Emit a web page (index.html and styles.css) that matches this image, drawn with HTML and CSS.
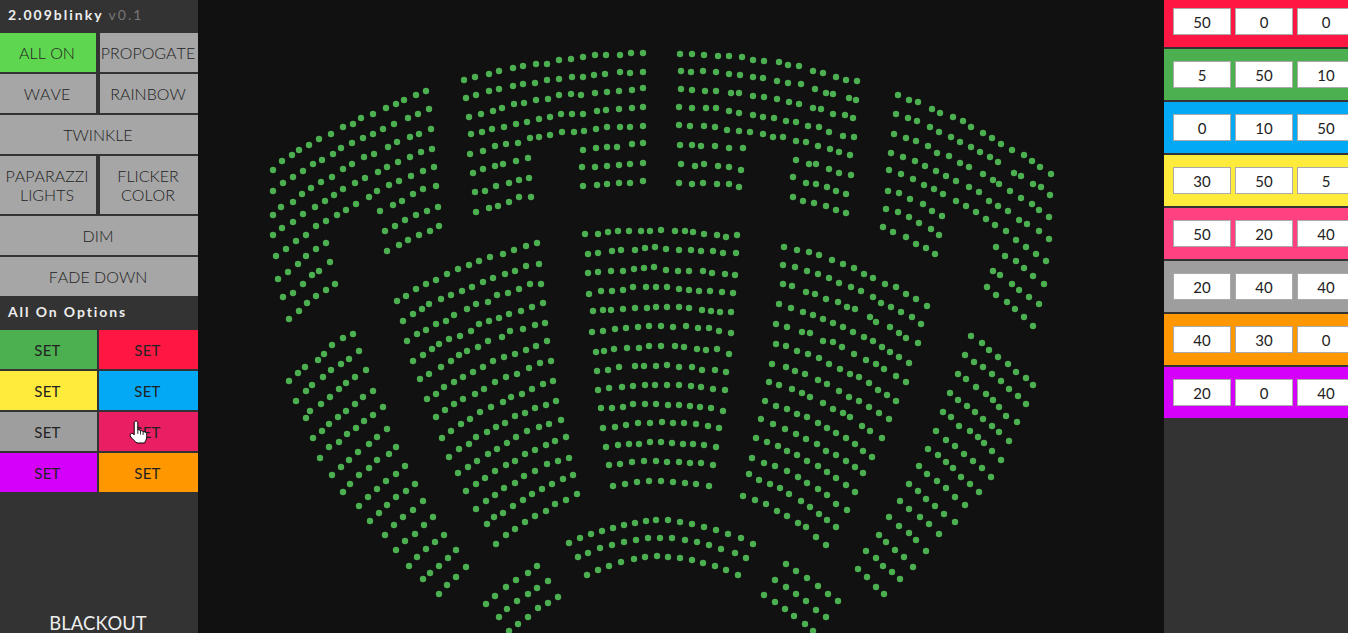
FILE: index.html
```html
<!DOCTYPE html>
<html lang="en">
<head>
  <meta charset="UTF-8">
  <title>2.009blinky</title>
  <link rel="stylesheet" href="styles.css">
</head>
<body>
  <div class="sidebar">
    <div class="title">2.009blinky <span class="version">v0.1</span></div>

    <div class="modes">
      <button class="mode active">ALL ON</button>
      <button class="mode">PROPOGATE</button>
      <button class="mode">WAVE</button>
      <button class="mode">RAINBOW</button>
      <button class="mode wide">TWINKLE</button>
      <button class="mode">PAPARAZZI<br>LIGHTS</button>
      <button class="mode">FLICKER<br>COLOR</button>
      <button class="mode wide">DIM</button>
      <button class="mode wide">FADE DOWN</button>
    </div>

    <div class="options-title">All On Options</div>

    <div class="swatches">
      <button class="swatch green">SET</button>
      <button class="swatch red">SET</button>
      <button class="swatch yellow">SET</button>
      <button class="swatch blue">SET</button>
      <button class="swatch grey">SET</button>
      <button class="swatch pink">SET</button>
      <button class="swatch purple">SET</button>
      <button class="swatch orange">SET</button>
    </div>

    <div class="blackout">BLACKOUT</div>

    <!-- mouse pointer caught in the screenshot -->
    <svg class="cursor" width="20" height="25" viewBox="0 0 20 25">
      <path d="M8 1C9 1 9.8 1.8 9.8 3V10C10.8 9.5 12 9.8 12.5 10.8C13.5 10.4 14.7 10.8 15.1 11.8C16.3 11.5 18.2 12 18.6 13.5C19 16 18.8 18.5 17.8 20.5L16.5 23H9C7 21.5 4.5 19 2.8 17C1.6 15.4 2.2 13.6 3.6 13.4C4.6 13.3 5.6 14 6.2 14.8V3C6.2 1.8 7 1 8 1Z" fill="#fff" stroke="#000" stroke-width="1"/>
      <path d="M9.8 10V14M12.5 10.8V14.5M15.1 11.8V15" fill="none" stroke="#000" stroke-width="0.8"/>
    </svg>
  </div>

  <div class="stage">
    <svg id="lights" class="lights" width="966" height="633" viewBox="198 0 966 633"></svg>
  </div>

  <div class="presets">
    <div class="preset red"><input value="50"><input value="0"><input value="0"></div>
    <div class="preset green"><input value="5"><input value="50"><input value="10"></div>
    <div class="preset blue"><input value="0"><input value="10"><input value="50"></div>
    <div class="preset yellow"><input value="30"><input value="50"><input value="5"></div>
    <div class="preset rose"><input value="50"><input value="20"><input value="40"></div>
    <div class="preset grey"><input value="20"><input value="40"><input value="40"></div>
    <div class="preset orange"><input value="40"><input value="30"><input value="0"></div>
    <div class="preset purple"><input value="20"><input value="0"><input value="40"></div>
  </div>

  <script src="lights.js"></script>
</body>
</html>
```

FILE: styles.css
```css
* {
  box-sizing: border-box;
}

html, body {
  height: 100%;
}

body {
  margin: 0;
  display: flex;
  overflow: hidden;
  background-color: #111;
  font-family: Lato, "Open Sans", sans-serif;
}

button {
  border: none;
  padding: 0;
  font-family: inherit;
  cursor: pointer;
}

.sidebar {
  position: relative;
  flex: 0 0 198px;
  display: flex;
  flex-direction: column;
  overflow: hidden;
  background-color: #333;
}

.title {
  height: 33px;
  padding: 7px 8px 0;
  color: #eee;
  font-size: 14px;
  font-weight: bold;
  letter-spacing: 2px;
  line-height: 16px;
}

.version {
  color: #777;
  font-weight: normal;
}

.modes {
  display: grid;
  grid-template-columns: 96px 98px;
  grid-template-rows: 39px 39px 39px 58px 39px 39px;
  column-gap: 4px;
  row-gap: 2px;
}

.mode {
  padding-right: 2px;
  background-color: #a6a6a6;
  color: #222;
  font-size: 16px;
  font-weight: 300;
  font-kerning: none;
  line-height: 19px;
  white-space: nowrap;
}

.mode.active {
  background-color: #5fd64f;
}

.mode.wide {
  grid-column: span 2;
}

.options-title {
  height: 34px;
  padding: 8px 8px 0;
  color: #eee;
  font-size: 14px;
  font-weight: bold;
  letter-spacing: 1.9px;
  line-height: 16px;
}

.swatches {
  display: grid;
  grid-template-columns: 97px 99px;
  grid-auto-rows: 39px;
  gap: 2px;
}

.swatch {
  padding-right: 2px;
  color: #222;
  font-size: 15px;
  letter-spacing: 0.2px;
  line-height: 18px;
}

.blackout {
  margin-top: auto;
  height: 21px;
  padding-right: 2px;
  color: #eee;
  font-size: 18.4px;
  font-kerning: none;
  line-height: 22px;
  text-align: center;
}

.cursor {
  position: absolute;
  left: 128px;
  top: 420px;
}

.stage {
  flex: 1;
  background-color: #111;
}

.lights {
  display: block;
}

.lights circle {
  fill: #4caf50;
}

.presets {
  flex: 0 0 184px;
  overflow: hidden;
  background-color: #333;
}

.preset {
  display: flex;
  gap: 4px;
  height: 51px;
  margin-bottom: 2px;
  padding: 12px 0 12px 9px;
}

.preset:first-child {
  margin-top: -4px;
}

.preset input {
  flex: 0 0 58px;
  width: 58px;
  height: 27px;
  border: 1px solid #aaa;
  padding: 0;
  background-color: #fff;
  color: #222;
  font-family: inherit;
  font-size: 15px;
  text-align: center;
}

.red { background-color: #ff1744; }
.green { background-color: #4caf50; }
.blue { background-color: #03a9f4; }
.yellow { background-color: #ffeb3b; }
.grey { background-color: #9e9e9e; }
.pink { background-color: #e91e63; }
.rose { background-color: #ff4081; }
.orange { background-color: #ff9800; }
.purple { background-color: #d500f9; }
```

FILE: lights.js
```js
var blocks = [
  // top left
  { x: 260, y: 80, s: 3, rows: [
    [39,270,66,243,96,225,117,210,147,195,177,177,213,162,249,141,279,132,303,114,339,102,378,84,408,72,432,60,468,45,498,33],
    [39,333,69,309,99,291,129,273,159,252,186,240,219,222,243,204,276,189,309,174,339,162,369,147,402,132,444,114,474,102,507,87],
    [39,405,63,381,99,366,126,342,153,324,183,306,216,291,249,267,276,252,312,231,342,222,384,201,411,186,450,171,477,162,513,147],
    [39,465,66,444,99,426,129,402,165,381,195,363,222,345,249,327,285,309,315,294,354,276,381,261,414,246,450,231,483,216,516,207],
    [48,528,78,507,108,483,138,465,168,438,198,423,231,405,258,390,288,372,327,351,351,333,387,315,417,303,453,288,489,273,522,261],
    [54,597,84,576,114,552,138,528,168,507,198,489],
    [360,393,399,375,426,363,459,342,489,327,528,318],
    [69,651,99,639,129,612,156,585,177,573,210,546],
    [375,453,405,438,435,420,468,405,501,393,534,381],
    [87,717,117,693,141,669,168,648,198,630,225,612],
    [381,513,417,495,444,480,477,465,510,453,537,438]
  ]},
  // top centre left
  { x: 450, y: 40, s: 3, rows: [
    [42,120,75,111,117,102,147,93,189,84,219,78,258,72,291,72,327,60,363,57,399,51,435,45,468,45,510,45,543,39,579,39],
    [48,174,78,165,117,153,147,147,189,138,219,132,255,129,291,120,327,117,366,111,399,111,432,105,465,102,510,96,540,99,579,96],
    [57,231,93,222,129,213,156,204,192,192,222,189,258,180,294,177,327,165,363,162,393,165,435,159,471,156,507,153,546,150,579,144],
    [63,282,96,276,126,267,162,261,198,252,231,246,267,237,300,231,333,222,366,222,399,222,441,213,468,210,507,207,546,204,579,201],
    [60,342,99,333,135,318,168,312,204,309,240,294,267,291,300,285,336,276,372,276,402,273,438,267,471,261,510,261,540,261,579,258],
    [69,399,99,387,135,378,159,372,198,363,234,354],
    [399,330,438,324,471,321,501,321,546,312,579,309],
    [75,456,105,453,138,438,177,429,207,420,237,414],
    [396,381,435,381,471,378,507,375,540,372,579,369],
    [78,516,117,504,144,498,177,486,207,471,243,471],
    [399,438,441,435,471,432,507,429,540,429,579,423]
  ]},
  // top centre right
  { x: 660, y: 40, s: 3, rows: [
    [60,42,96,42,132,45,174,48,207,48,246,51,279,60,312,63,357,66,384,75,417,78,459,93,489,99,528,111,558,120,591,123],
    [63,93,93,96,129,93,168,96,207,102,240,105,279,111,309,114,351,123,384,129,423,132,465,147,498,159,519,162,567,174,588,180],
    [63,147,96,150,135,153,168,153,213,159,237,159,279,168,312,171,351,177,387,186,417,192,459,204,483,207,519,222,555,225,579,234],
    [57,201,96,204,138,204,168,204,207,213,237,219,279,225,309,231,342,234,378,243,408,246,444,258,477,261,507,276,549,288,582,291],
    [57,255,90,258,132,258,165,261,201,270,237,273,270,276,309,282,339,291,369,291,408,303,438,306,474,318,510,327,537,336,570,345],
    [60,315,96,315,123,318,165,318,207,324,249,324],
    [408,360,447,372,468,372,507,387,537,399,573,405],
    [63,372,105,378,132,372,174,378,207,381,243,390],
    [399,411,438,429,468,432,501,441,528,453,558,462],
    [57,429,96,432,129,429,171,432,207,432,237,441],
    [399,471,429,483,462,489,498,498,528,510,558,519]
  ]},
  // top right
  { x: 870, y: 85, s: 3, rows: [
    [84,30,117,45,144,51,186,72,210,84,249,96,279,108,303,126,339,144,366,159,393,177,426,195,462,210,486,228,510,246,543,267],
    [78,87,114,99,141,108,180,126,207,141,243,156,270,171,303,186,330,201,360,216,384,231,432,264,453,273,489,297,513,306,540,330],
    [72,147,108,159,138,168,174,183,201,204,237,213,270,234,297,246,339,267,369,285,387,297,420,318,453,339,486,357,507,375,537,396],
    [63,204,99,216,135,228,165,243,198,258,228,273,258,288,297,306,327,321,357,348,384,363,414,378,447,405,471,417,507,438,537,462],
    [57,255,93,267,129,282,162,300,192,312,219,327],
    [258,348,288,363,318,381,348,402,375,420,408,438,438,465,468,486,498,507,528,528],
    [54,318,87,324,120,342,159,357,186,378,216,393],
    [378,486,405,513,438,528,462,549,489,573,522,597],
    [48,372,84,381,117,396,147,414,183,432,207,450],
    [369,558,390,570,426,597,447,615,477,636,507,657],
    [39,426,69,441,108,456,138,477,168,489,195,507],
    [351,606,378,630,411,651,435,672,462,696,489,723]
  ]},
  // middle left
  { x: 390, y: 235, s: 3, rows: [
    [21,198,48,183,78,162,108,147,138,135,171,117,204,102,237,90,267,78,300,66,339,57,372,45,408,33,441,24],
    [39,258,69,237,96,222,117,207,153,192,183,180,216,168,246,156,279,141,309,129,345,117,375,108,408,93,447,87],
    [51,318,81,297,108,285,138,267,168,258,192,240,231,222,258,207,294,201,321,180,354,174,387,162,420,147,453,147],
    [69,378,99,360,126,342,147,327,177,312,210,303,243,288,267,267,297,258,327,249,357,237,393,228,426,216,459,204],
    [90,432,117,417,153,396,183,378,207,360,231,348,264,336,294,318,336,306,360,288,399,282,435,270,465,264],
    [111,492,138,477,162,456,192,441,219,426,249,411,279,396,309,378,342,366,375,357,408,345,438,333,471,318],
    [138,546,165,525,192,507,219,492,255,477,282,462,315,441,348,426,381,417,417,399,450,384,483,378],
    [156,609,183,588,213,567,240,552,270,531,303,516,339,501,363,486,396,477,426,462,459,447,489,438],
    [177,666,207,642,237,627,258,606,291,591,318,576,345,564,375,543,405,534,435,519,468,510,498,498],
    [204,714,234,696,261,678,294,657,321,642,351,624,378,606,411,588,447,576,477,567,513,555],
    [228,768,258,747,285,729,315,708,348,690,375,678,405,657,435,645,468,630,495,618,528,606],
    [258,822,288,798,315,780,342,759,375,744,402,723,435,708,471,687,504,678,537,669],
    [291,867,312,846,339,834,369,813,399,795,426,777,456,762,486,747,519,732,549,720],
    [318,927,348,900,375,882,405,861,435,843,468,828,495,807,528,795,561,777]
  ]},
  // middle centre
  { x: 575, y: 220, s: 3, rows: [
    [30,42,69,42,99,36,129,33,162,33,198,33,225,33,258,30,300,33,330,33,354,36,387,42,426,45,453,51,486,45],
    [39,102,69,99,111,93,138,90,180,90,210,84,240,81,273,87,312,90,348,90,378,93,414,93,444,99,483,99],
    [39,159,69,156,108,153,144,153,177,147,207,144,237,141,273,150,309,153,342,153,384,153,411,159,450,162,480,165],
    [42,222,78,213,111,213,144,210,174,201,213,201,243,201,276,201,312,207,342,210,372,213,405,213,441,216,474,219],
    [54,273,84,270,108,270,144,267,180,264,216,264,243,261,276,261,312,261,342,264,381,270,408,273,435,276,468,276],
    [51,336,84,333,120,327,153,324,189,321,222,318,258,318,294,321,333,318,369,324,402,324,432,333,468,339],
    [63,396,87,393,117,387,156,384,192,384,222,378,258,378,300,378,327,381,366,387,393,390,426,387,462,402],
    [66,453,99,450,132,441,180,438,207,438,243,438,276,435,312,441,351,441,381,450,420,450,453,456],
    [69,510,102,504,141,501,174,498,210,495,240,495,276,495,312,495,348,498,378,501,414,507,450,510],
    [78,564,111,564,144,561,174,552,210,552,243,552,279,555,312,555,345,558,375,561,408,564,444,573],
    [84,624,120,621,153,615,189,609,225,609,261,606,294,609,327,609,363,612,399,618,432,624],
    [93,681,129,675,162,672,192,672,225,666,258,666,291,669,324,672,354,672,387,675,423,681],
    [102,735,135,732,171,726,207,723,243,723,276,726,312,726,345,729,378,729,414,735],
    [114,798,150,792,186,786,222,783,258,783,294,786,330,789,363,792,402,798]
  ]},
  // middle right
  { x: 735, y: 240, s: 3, rows: [
    [147,21,186,30,222,36,252,45,291,60,324,72,357,84,387,102,414,114,450,132,483,141,513,162,543,177,576,198],
    [144,75,180,81,216,93,249,102,282,114,312,129,348,141,378,153,414,171,438,189,468,201,498,216,531,231,558,252],
    [144,132,171,138,213,156,240,162,273,177,309,186,336,201,360,207,405,231,423,246,465,261,492,279,513,294,549,309],
    [132,192,168,204,204,216,234,225,264,237,294,249,324,261,354,276,387,291,414,303,441,321,465,336,492,351,522,369],
    [123,252,156,261,201,276,225,279,264,303,294,306,321,321,357,342,393,360,423,372,447,387,483,408,513,426],
    [123,312,153,318,186,333,219,342,252,354,282,372,315,387,345,402,372,411,402,429,429,450,456,465,483,483],
    [111,372,153,381,180,393,210,402,249,420,276,432,312,453,342,471,372,483,402,501,432,519,462,537],
    [102,426,132,435,171,447,201,459,225,471,264,489,294,507,324,519,345,531,381,558,405,573,441,594],
    [90,483,123,498,156,507,186,522,216,531,249,549,276,564,303,579,333,594,360,612,384,633,411,651],
    [78,537,114,552,150,567,183,582,213,597,246,612,273,633,303,645,333,663,360,681,384,699],
    [63,594,96,606,129,618,156,633,186,645,216,663,249,678,276,696,303,714,333,735,360,756],
    [51,654,87,669,120,678,156,693,189,711,216,729,249,747,276,765,303,792,336,810],
    [42,702,72,720,105,732,135,744,162,762,198,783,225,801,252,822,276,840,303,861],
    [24,768,60,780,93,792,126,813,156,828,189,849,213,861,243,891,273,915]
  ]},
  // lower left wing and bottom left
  { x: 280, y: 325, s: 3, rows: [
    [27,168,54,144,75,126,114,105,132,87,156,60,189,39,219,27],
    [48,228,78,198,96,180,129,156,153,135,183,117,207,102,237,78],
    [78,279,90,258,123,237,150,216,177,192,198,174,225,156,258,135],
    [99,339,126,318,147,297,174,276,198,258,225,237,249,216,279,198],
    [120,399,147,366,177,351,201,327,228,309,252,288,279,270,309,246],
    [156,450,183,426,207,405,234,381,267,357,291,336,321,312],
    [189,501,210,477,237,450,267,429,291,405,327,387,348,366],
    [237,543,264,516,291,492,318,468,348,447,375,423],
    [270,588,297,564,321,540,348,516,378,498,405,477],
    [315,630,342,600,369,576,399,555,429,528],
    [348,675,375,648,405,627,432,600,459,576],
    [387,723,411,696,438,672,465,651,492,630],
    [429,762,450,744,477,723,504,699,528,675],
    [477,807,501,780,528,756,558,726],
    [618,837,645,813,678,786,708,765,744,744,771,723],
    [657,876,681,852,711,828,744,807,771,789,804,768],
    [687,918,714,897,744,876,774,849,804,834,834,816]
  ]},
  // lower right wing and bottom right
  { x: 750, y: 330, s: 3, rows: [
    [663,18,696,39,717,60,744,81,774,102,798,126,828,144,849,165],
    [645,75,672,96,699,111,726,132,753,153,777,177,804,198,828,222],
    [624,132,648,147,678,171,708,192,729,210,747,231,768,258,801,276],
    [600,189,624,210,651,228,675,246,699,267,726,288,747,306,777,333],
    [579,246,603,261,627,288,660,303,684,321,702,339,726,363,753,390],
    [558,303,588,330,615,348,642,372,669,393,696,414,723,441],
    [534,357,564,375,588,396,609,414,633,441,660,462,687,486],
    [507,408,531,432,561,453,588,474,615,501,645,525],
    [477,462,504,483,528,507,555,528,582,552,615,576],
    [450,513,477,537,510,561,537,582,567,612],
    [417,561,447,588,477,609,498,630,528,663],
    [387,615,408,636,435,660,462,681,489,711],
    [348,663,378,684,399,708,426,726,450,747],
    [324,717,351,741,378,771,402,792],
    [108,702,138,723,171,744,204,768,234,792,264,813],
    [75,750,108,771,138,792,168,813,198,840,228,861],
    [42,795,75,816,105,837,132,858,165,882,189,903]
  ]},
  // front arc
  { x: 0, y: 0, s: 1, rows: [
    [569,543,580,538,591,534,602,531,613,528,624,525,635,523,646,521,656,520,668,520,680,522,692,524,704,527,716,530,728,534,741,538,753,544],
    [578,557,588,553,600,548,612,545,624,542,636,540,648,538,660,538,672,538,685,540,697,542,709,545,721,549,735,553,746,558],
    [587,575,598,570,609,566,621,562,634,559,645,557,657,556,668,557,680,558,692,560,703,563,715,566,726,570,738,575]
  ]}
];

var svg = document.getElementById('lights');

blocks.forEach(function (block) {
  block.rows.forEach(function (row) {
    for (var i = 0; i < row.length; i += 2) {
      var dot = document.createElementNS('http://www.w3.org/2000/svg', 'circle');
      dot.setAttribute('cx', block.x + row[i] / block.s);
      dot.setAttribute('cy', block.y + row[i + 1] / block.s);
      dot.setAttribute('r', 3.2);
      svg.appendChild(dot);
    }
  });
});
```
